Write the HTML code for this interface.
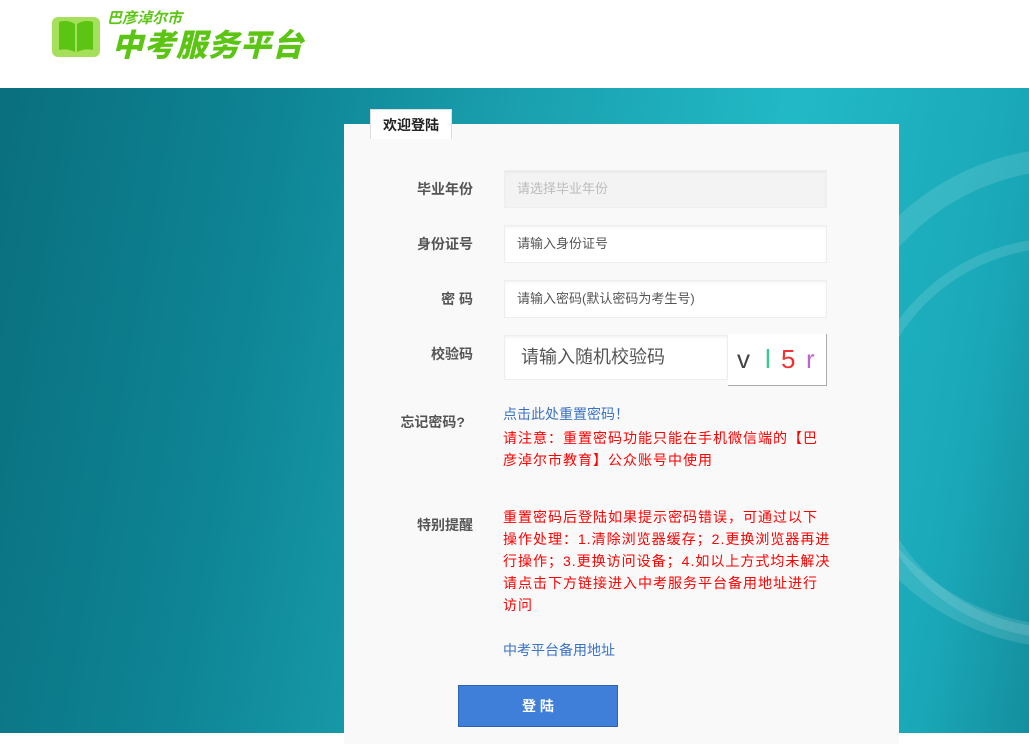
<!DOCTYPE html>
<html><head><meta charset="utf-8"><style>
*{margin:0;padding:0;box-sizing:border-box}
body{width:1029px;height:733px;overflow:hidden;font-family:"Liberation Sans","Noto Sans CJK SC",sans-serif;background:#fff;position:relative}
.hdr{height:88px;background:#fff;position:relative}
.bg{position:absolute;top:88px;left:0;width:1029px;height:645px;background:linear-gradient(100deg,#0a6f7e 0%,#0e8595 25%,#1a9fae 45%,#22b9c6 70%,#1aa8b8 90%,#148e9e 100%);overflow:hidden}
.ring{position:absolute;border-radius:50%;border:22px solid rgba(255,255,255,.12)}
.card{position:absolute;left:344px;top:124px;width:555px;height:620px;background:#f9f9f9}
.tab{position:absolute;left:370px;top:109px;width:82px;height:30px;background:#fff;border:1px solid #ddd;border-bottom:none;font-size:14px;font-weight:bold;color:#222;text-align:center;line-height:30px}
.lbl{position:absolute;width:130px;text-align:right;font-size:14px;font-weight:bold;color:#555}
.inp{position:absolute;left:504px;width:323px;height:38px;background:#fff;border:1px solid #eee;box-shadow:inset 0 2px 2px rgba(0,0,0,.04);font-size:13px;color:#555;padding-left:12px;line-height:36px}
.red{color:#f00;font-size:14px;line-height:22px;position:absolute;left:503px;letter-spacing:1px}
.blue{color:#3a72c4;font-size:14px;position:absolute;left:503px}
</style></head><body>
<div class="hdr">
<svg style="position:absolute;left:51px;top:16px" width="50" height="42" viewBox="0 0 50 42"><rect x="1" y="1" width="48" height="40" rx="6" fill="#a6e05a"/><path d="M8 6 Q16 3 24 8 L24 36 Q16 32 8 34Z M26 8 Q34 3 42 6 L42 34 Q34 32 26 36Z" fill="#5cc514"/></svg>
<div style="position:absolute;left:107px;top:10px;font-size:15px;font-weight:bold;font-style:italic;color:#5cc514;line-height:18px">巴彦淖尔市</div>
<div style="position:absolute;left:112px;top:29px;font-size:31px;font-weight:900;font-style:italic;color:#5cc514;letter-spacing:1px;line-height:34px">中考服务平台</div>
</div>
<div class="bg">
<div class="ring" style="left:820px;top:60px;width:500px;height:500px"></div>
<div class="ring" style="left:860px;top:150px;width:400px;height:400px;border-width:10px"></div>
</div>
<div class="card"></div>
<div class="tab">欢迎登陆</div>
<div class="lbl" style="left:343px;top:179px">毕业年份</div>
<div class="inp" style="top:170px;background:#f3f3f3;color:#bbb">请选择毕业年份</div>
<div class="lbl" style="left:343px;top:234px">身份证号</div>
<div class="inp" style="top:225px">请输入身份证号</div>
<div class="lbl" style="left:343px;top:289px">密 码</div>
<div class="inp" style="top:280px">请输入密码(默认密码为考生号)</div>
<div class="lbl" style="left:343px;top:344px">校验码</div>
<div class="inp" style="top:335px;width:224px;height:45px;font-size:18px;line-height:43px;padding-left:16px">请输入随机校验码</div>
<div style="position:absolute;left:728px;top:334px;width:99px;height:52px;background:#fff;border-right:1px solid #aaa;border-bottom:1px solid #aaa;font-size:26px;line-height:50px"><span style="position:absolute;left:9px;color:#444">v</span><span style="position:absolute;left:37px;color:#3c8">l</span><span style="position:absolute;left:53px;color:#e33">5</span><span style="position:absolute;left:78px;color:#b6c">r</span></div>
<div class="lbl" style="left:335px;top:412px">忘记密码?</div>
<div class="blue" style="top:404px">点击此处重置密码！</div>
<div class="red" style="top:427px;width:328px">请注意：重置密码功能只能在手机微信端的【巴彦淖尔市教育】公众账号中使用</div>
<div class="lbl" style="left:343px;top:515px">特别提醒</div>
<div class="red" style="top:506px;width:328px">重置密码后登陆如果提示密码错误，可通过以下操作处理：1.清除浏览器缓存；2.更换浏览器再进行操作；3.更换访问设备；4.如以上方式均未解决请点击下方链接进入中考服务平台备用地址进行访问</div>
<div class="blue" style="top:640px">中考平台备用地址</div>
<div style="position:absolute;left:458px;top:685px;width:160px;height:42px;background:#3f7fd9;border:1px solid #2e64b8;color:#fff;font-size:14px;font-weight:bold;text-align:center;line-height:40px">登 陆</div>
</body></html>
